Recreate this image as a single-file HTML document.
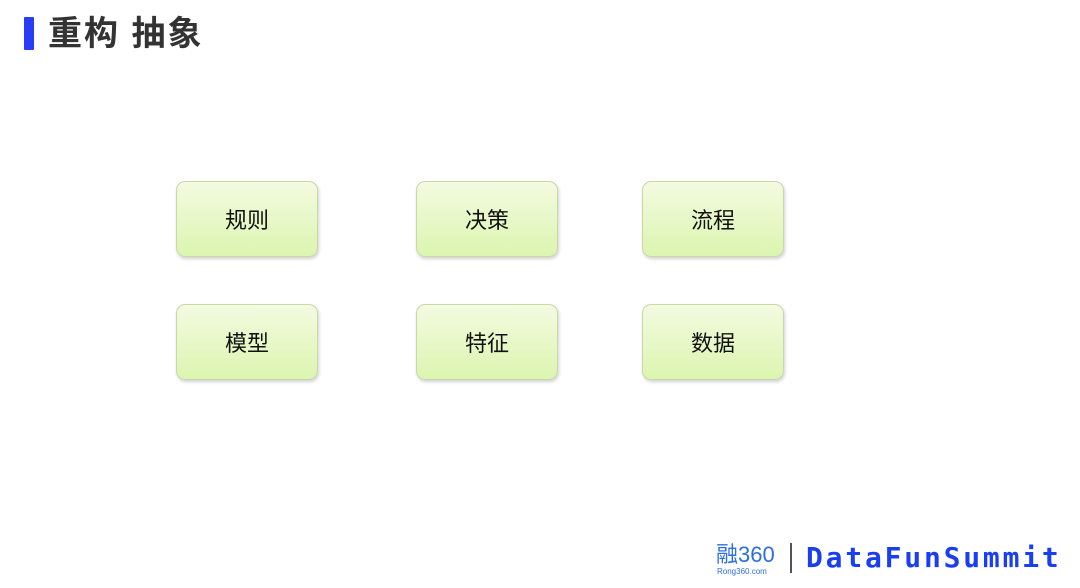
<!DOCTYPE html>
<html><head><meta charset="utf-8"><style>
body{margin:0;width:1080px;height:588px;background:#fff;position:relative;overflow:hidden;font-family:"Liberation Sans","Noto Sans CJK SC",sans-serif}
.bar{position:absolute;left:24px;top:17px;width:10px;height:33px;background:#2b3cf5;border-radius:1px}
.title{position:absolute;left:48px;top:12px;font-size:34px;font-weight:bold;color:#333;line-height:44px;letter-spacing:2px}
.box{position:absolute;width:142px;height:76px;border:1px solid #c8d8a8;border-radius:9px;background:linear-gradient(#f3fbe0,#dcf5b0);box-shadow:1px 2px 3px rgba(0,0,0,.18);display:flex;align-items:center;justify-content:center;font-size:22px;color:#111;box-sizing:border-box}
.logo{position:absolute;left:716px;top:544px;color:#2b6fe0;font-size:22px;line-height:22px}
.small{position:absolute;left:717px;top:567px;font-size:8px;color:#2b6fe0}
.sep{position:absolute;left:790px;top:543px;width:2px;height:30px;background:#555}
.df{position:absolute;left:806px;top:540px;font-size:28px;font-weight:bold;color:#1a3ff0;letter-spacing:2.8px;font-family:"DejaVu Sans Mono","Liberation Mono",monospace;line-height:36px}
</style></head><body>
<div class="bar"></div>
<div class="title">重构 抽象</div>
<div class="box" style="left:176px;top:181px">规则</div>
<div class="box" style="left:416px;top:181px">决策</div>
<div class="box" style="left:642px;top:181px">流程</div>
<div class="box" style="left:176px;top:304px">模型</div>
<div class="box" style="left:416px;top:304px">特征</div>
<div class="box" style="left:642px;top:304px">数据</div>
<div class="logo">融360</div>
<div class="small">Rong360.com</div>
<div class="sep"></div>
<div class="df">DataFunSummit</div>
</body></html>
